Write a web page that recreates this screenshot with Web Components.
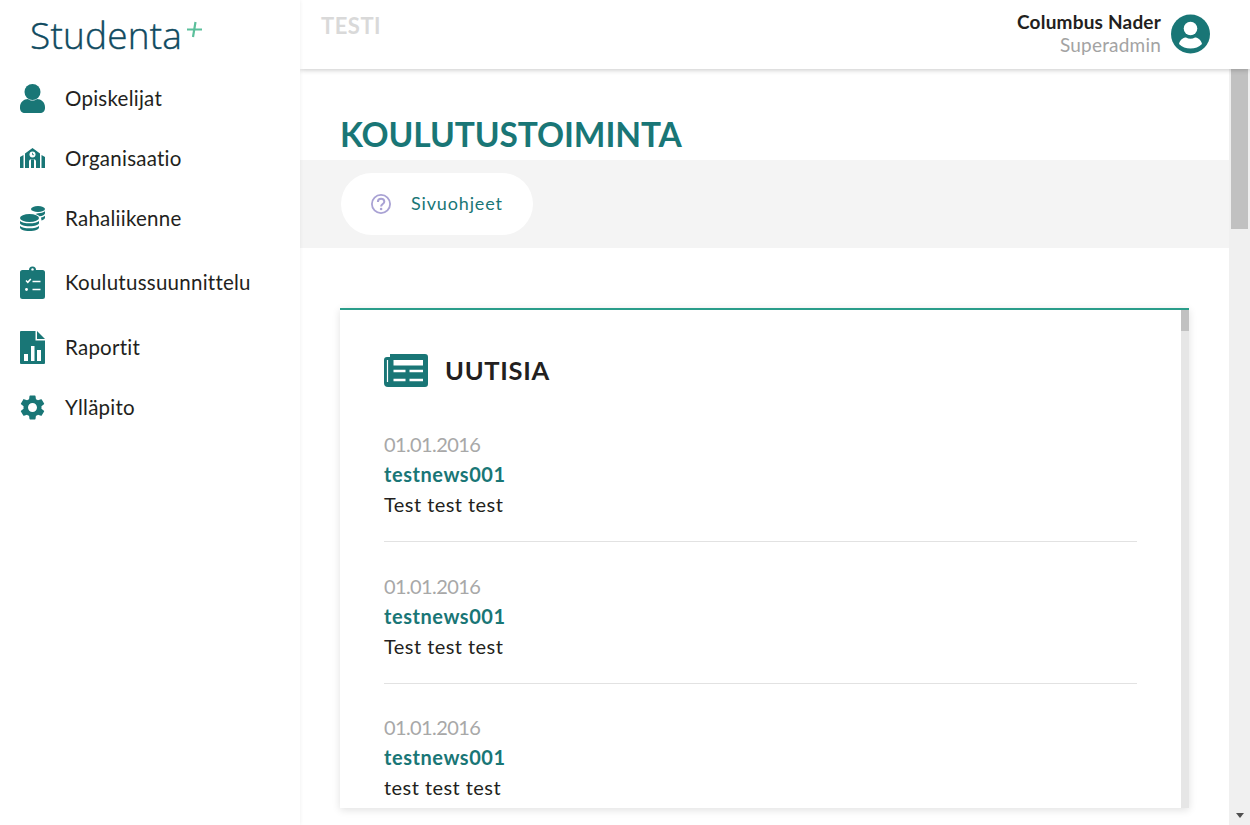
<!DOCTYPE html>
<html>
<head>
<meta charset="utf-8">
<title>Studenta</title>
<style>
  html, body { margin: 0; height: 100%; overflow: hidden; background: #fff; }
  body { font-family: "Lato", "Liberation Sans", sans-serif; color: #231f20; }
</style>
</head>
<body>
<app-shell>
  <side-bar slot="side">
    <nav-item label="Opiskelijat" style="--h:60px">
      <svg width="25" height="29" viewBox="0 0 25 29"><circle cx="12.5" cy="8" r="8" fill="#197676"/><path d="M0 23c0-5 4-8 8-8 1.400 1 2.800 1.500 4.500 1.500S15.600 16 17 15c4 0 8 3 8 8v1c0 3-2 5-5 5H5c-3 0-5-2-5-5z" fill="#197676"/></svg>
    </nav-item>
    <nav-item label="Organisaatio" style="--h:60px">
      <svg width="25" height="20" viewBox="0 0 25 20"><path d="M0 9l3.500-2v13H0zM25 9l-3.500-2v13H25zM5 5.500L12.500 0 20 5.500V20h-4v-6.500c0-1-.7-1.800-1.700-1.800h-3.600c-1 0-1.700.8-1.700 1.800V20H5z" fill="#197676"/><path d="M10.500 12h4v8h-4z" fill="#197676"/><path d="M9.800 11.500h1.200V20H9.800zM14 11.500h1.200V20H14z" fill="#fff"/><circle cx="12.500" cy="6.500" r="3" fill="#fff"/><path d="M12.500 4.800v1.900h1.500" stroke="#197676" stroke-width=".8" fill="none"/></svg>
    </nav-item>
    <nav-item label="Rahaliikenne" style="--h:60px">
      <svg width="25" height="25" viewBox="0 0 25 25" fill="#197676"><ellipse cx="18" cy="3" rx="7" ry="3"/><path d="M18 7.200c2.800 0 5.500-.8 7-2v2c0 1.500-2.500 2.800-5.500 3-1-1-2.500-1.700-4-2.300z"/><path d="M21 11.500c1.800-.3 3.200-1 4-1.800v2c0 1.200-1.500 2.200-3.500 2.700z"/><ellipse cx="9.500" cy="12" rx="9.500" ry="4"/><path d="M0 15c1.800 1.500 5 2.300 9.500 2.300s7.700-.8 9.500-2.300v2c0 1.800-4 3.300-9.500 3.300S0 18.800 0 17z"/><path d="M0 20c1.800 1.500 5 2.300 9.500 2.300s7.700-.8 9.500-2.300v1.500c0 1.900-4 3.500-9.500 3.500S0 23.400 0 21.500z"/></svg>
    </nav-item>
    <nav-item label="Koulutussuunnittelu" style="--h:68px">
      <svg width="25" height="33" viewBox="0 0 25 33"><path d="M2.500 4H9a3.500 3.500 0 0 1 7 0h6.500A2.500 2.500 0 0 1 25 6.500V30.500A2.500 2.500 0 0 1 22.500 33H2.500A2.500 2.500 0 0 1 0 30.500V6.500A2.500 2.500 0 0 1 2.500 4z" fill="#197676"/><circle cx="12.500" cy="3.400" r="1.200" fill="#fff"/><path d="M6 14.500l1.800 1.800 3-3.300" stroke="#fff" stroke-width="1.500" fill="none"/><path d="M12.500 15.500h8M12.500 23.500h8" stroke="#fff" stroke-width="1.600"/><circle cx="6.500" cy="23.500" r="1.400" fill="#fff"/></svg>
    </nav-item>
    <nav-item label="Raportit" style="--h:62px">
      <svg width="25" height="33" viewBox="0 0 25 33"><path d="M1 0h14.500v9.500H25V32a1 1 0 0 1-1 1H1a1 1 0 0 1-1-1V1a1 1 0 0 1 1-1z" fill="#197676"/><path d="M17 0l8 8h-8z" fill="#197676"/><path d="M4 23h4v7H4zM11 15h3.500v15H11zM17 19h4v11h-4z" fill="#fff"/></svg>
    </nav-item>
    <nav-item label="Ylläpito" style="--h:58px">
      <svg width="25" height="25" viewBox="2.600 2 18.800 20"><path fill="#197676" d="M19.140 12.940c.04-.3.06-.61.06-.94 0-.32-.02-.64-.07-.94l2.030-1.580c.18-.14.23-.41.12-.61l-1.920-3.320c-.12-.22-.37-.29-.59-.22l-2.390.96c-.5-.38-1.030-.7-1.620-.94l-.36-2.540c-.04-.24-.24-.41-.48-.41h-3.840c-.24 0-.43.17-.47.41l-.36 2.540c-.59.24-1.130.57-1.620.94l-2.390-.96c-.22-.08-.47 0-.59.22L2.740 8.870c-.12.21-.08.47.12.61l2.030 1.580c-.05.3-.09.63-.09.94s.02.64.07.94l-2.030 1.580c-.18.14-.23.41-.12.61l1.920 3.320c.12.22.37.29.59.22l2.390-.96c.5.38 1.030.7 1.620.94l.36 2.540c.05.24.24.41.48.41h3.840c.24 0 .44-.17.47-.41l.36-2.540c.59-.24 1.130-.56 1.620-.94l2.390.96c.22.08.47 0 .59-.22l1.920-3.320c.12-.22.07-.47-.12-.61l-2.010-1.580zM12 15.600c-1.980 0-3.600-1.620-3.600-3.600s1.620-3.600 3.600-3.600 3.600 1.620 3.600 3.600-1.620 3.600-3.600 3.600z"/></svg>
    </nav-item>
  </side-bar>
  <top-bar slot="top" context="TESTI" user="Columbus Nader" role="Superadmin"></top-bar>
  <page-view slot="main" heading="KOULUTUSTOIMINTA">
    <news-card heading="UUTISIA">
      <news-item date="01.01.2016" name="testnews001" text="Test test test"></news-item>
      <news-item date="01.01.2016" name="testnews001" text="Test test test"></news-item>
      <news-item date="01.01.2016" name="testnews001" text="test test test"></news-item>
    </news-card>
  </page-view>
</app-shell>

<script>
// app frame: sidebar on the left, top bar and page on the right
class AppShell extends HTMLElement {
  constructor () {
    super();
    this.attachShadow({ mode: 'open' });
    this.shadowRoot.innerHTML = `
      <style>
        :host { display: grid; grid-template-columns: 300px 950px; grid-template-rows: 69px 756px; width: 1250px; height: 825px; overflow: hidden; }
        .side { grid-row: 1 / 3; position: relative; z-index: 3; box-shadow: 0 0 4px rgba(0, 0, 0, 0.07); background: #fff; }
        .top { position: relative; z-index: 2; box-shadow: 0 1px 5px rgba(0, 0, 0, 0.22); background: #fff; }
        .main { min-height: 0; overflow: hidden; display: flex; }
      </style>
      <div class="side"><slot name="side"></slot></div>
      <div class="top"><slot name="top"></slot></div>
      <div class="main"><slot name="main"></slot></div>`;
  }
}

class SideBar extends HTMLElement {
  constructor () {
    super();
    this.attachShadow({ mode: 'open' });
    this.shadowRoot.innerHTML = `
      <style>
        :host { display: block; }
        .logo { height: 68px; display: flex; padding-left: 30px; box-sizing: border-box; }
        .word { font-family: "Open Sans", sans-serif; font-weight: 300; font-size: 37px; line-height: 70px; color: #0f4a60; letter-spacing: 0.2px; -webkit-text-stroke: 0.4px #0f4a60; }
        svg { margin: 21px 0 0 4px; }
      </style>
      <div class="logo">
        <span class="word">Studenta</span>
        <svg width="17" height="17" viewBox="0 0 17 17"><path d="M9.500 1L7 16M1 8.500h15" stroke="#5bbf9b" stroke-width="2.200" fill="none"/></svg>
      </div>
      <slot></slot>`;
  }
}

// one row of the side menu, icon goes in the slot
class NavItem extends HTMLElement {
  constructor () {
    super();
    this.attachShadow({ mode: 'open' });
    this.shadowRoot.innerHTML = `
      <style>
        :host { display: flex; align-items: center; height: var(--h, 60px); padding-left: 20px; }
        .icon { width: 25px; display: flex; justify-content: center; flex: none; }
        .label { margin: -1px 0 0 20px; font-size: 20.500px; letter-spacing: 0.250px; color: #231f20; }
      </style>
      <span class="icon"><slot></slot></span>
      <span class="label"></span>`;
  }

  connectedCallback () {
    this.shadowRoot.querySelector('.label').textContent = this.getAttribute('label');
  }
}

class TopBar extends HTMLElement {
  constructor () {
    super();
    this.attachShadow({ mode: 'open' });
    this.shadowRoot.innerHTML = `
      <style>
        :host { display: flex; justify-content: space-between; height: 69px; padding: 0 40px 0 21px; box-sizing: border-box; }
        .context { font-size: 22px; font-weight: 700; color: #d9d9d9; margin-top: 12px; line-height: 28px; letter-spacing: 0.500px; }
        .right { display: flex; gap: 10px; margin-top: 10px; }
        .who { text-align: right; line-height: 24px; font-size: 19px; letter-spacing: 0.200px; }
        .user { font-weight: 700; color: #231f20; }
        .role { color: #a3a3a3; margin-top: -1px; }
        svg { margin-top: 4px; }
      </style>
      <div class="context"></div>
      <div class="right">
        <div class="who"><div class="user"></div><div class="role"></div></div>
        <svg width="39" height="40" viewBox="0 0 39 40">
          <circle cx="19.500" cy="20" r="19.500" fill="#197676"/>
          <circle cx="19.500" cy="14.500" r="6.800" fill="#fff"/>
          <path d="M8 30c1-5 5-6.500 7-6.500 1.500 .8 3 1.200 4.500 1.200s3-.4 4.500-1.200c2 0 6 1.500 7 6.500-3 3-7 4.500-11.500 4.500S11 33 8 30z" fill="#fff"/>
        </svg>
      </div>`;
  }

  connectedCallback () {
    const root = this.shadowRoot;
    root.querySelector('.context').textContent = this.getAttribute('context');
    root.querySelector('.user').textContent = this.getAttribute('user');
    root.querySelector('.role').textContent = this.getAttribute('role');
  }
}

// page content with its heading, help band and the window scrollbar
class PageView extends HTMLElement {
  constructor () {
    super();
    this.attachShadow({ mode: 'open' });
    this.shadowRoot.innerHTML = `
      <style>
        :host { display: flex; width: 950px; height: 756px; }
        .page { width: 929px; flex: none; display: flex; flex-direction: column; }
        h1 { margin: 0; height: 91px; box-sizing: border-box; padding: 44px 0 0 40px; font-size: 33.500px; line-height: 42px; font-weight: 700; color: #197676; letter-spacing: -0.100px; white-space: nowrap; }
        .band { height: 88px; background: #f4f4f4; padding: 13px 0 0 41px; box-sizing: border-box; flex: none; }
        .help { display: inline-flex; align-items: center; width: 192px; height: 62px; box-sizing: border-box; padding-left: 30px; gap: 20px; background: #fff; border-radius: 31px; font-size: 18px; color: #197676; letter-spacing: 0.850px; }
        .help span { margin-top: -2px; }
        .body { padding: 60px 40px 0; flex: 1; min-height: 0; display: flex; }
        .bar { width: 21px; flex: none; background: #f0f0f0; display: flex; flex-direction: column; justify-content: space-between; align-items: center; }
        .thumb { width: 17px; height: 160px; background: #c1c1c1; }
        .arrow { width: 0; height: 0; border: 4.500px solid transparent; border-top: 5px solid #505050; border-bottom: 0; margin-bottom: 7px; }
      </style>
      <div class="page">
        <h1></h1>
        <div class="band">
          <div class="help">
            <svg width="20" height="20" viewBox="0 0 20 20"><circle cx="10" cy="10" r="9.100" fill="none" stroke="#a9a2d4" stroke-width="1.800"/><path d="M6.900 8c0-2 1.400-3.200 3.200-3.200S13.300 6 13.300 7.700c0 2.300-3.200 2.400-3.200 4.800" fill="none" stroke="#a9a2d4" stroke-width="2"/><circle cx="10.100" cy="15" r="1.300" fill="#a9a2d4"/></svg>
            <span>Sivuohjeet</span>
          </div>
        </div>
        <div class="body"><slot></slot></div>
      </div>
      <div class="bar"><div class="thumb"></div><div class="arrow"></div></div>`;
  }

  connectedCallback () {
    this.shadowRoot.querySelector('h1').textContent = this.getAttribute('heading');
  }
}

class NewsCard extends HTMLElement {
  constructor () {
    super();
    this.attachShadow({ mode: 'open' });
    this.shadowRoot.innerHTML = `
      <style>
        :host { display: flex; width: 849px; height: 500px; box-sizing: border-box; border-top: 2px solid #2a9d8a; box-shadow: 0 2px 8px rgba(0, 0, 0, 0.12); background: #fff; }
        .inner { flex: 1; min-width: 0; overflow: hidden; padding: 44px 44px 0 44px; box-sizing: border-box; }
        .head { display: flex; align-items: center; gap: 17px; height: 33px; margin-bottom: 42px; }
        h2 { margin: -2px 0 0; font-size: 25.500px; font-weight: 700; letter-spacing: 0.700px; color: #231f20; }
        .bar { width: 8px; flex: none; background: #e6e6e6; }
        .thumb { height: 21px; background: #c1c1c1; }
      </style>
      <div class="inner">
        <div class="head">
          <svg width="44" height="33" viewBox="0 0 44 33">
            <path d="M6 0h35a3 3 0 0 1 3 3v27a3 3 0 0 1-3 3H4a4 4 0 0 1-4-4V6a3 3 0 0 1 3-3h3z" fill="#197676"/>
            <path d="M3.500 6v22" stroke="#fff" stroke-width="1.200"/>
            <path d="M9.500 6h29.500v5.500H9.500z" fill="#fff"/>
            <path d="M9.500 17h12M25.500 17h13.500M9.500 26h12M25.500 26h13.500" stroke="#fff" stroke-width="2.400"/>
          </svg>
          <h2></h2>
        </div>
        <slot></slot>
      </div>
      <div class="bar"><div class="thumb"></div></div>`;
  }

  connectedCallback () {
    this.shadowRoot.querySelector('h2').textContent = this.getAttribute('heading');
  }
}

class NewsItem extends HTMLElement {
  constructor () {
    super();
    this.attachShadow({ mode: 'open' });
    this.shadowRoot.innerHTML = `
      <style>
        :host { display: block; padding-bottom: 22px; margin-bottom: 28.500px; border-bottom: 1px solid #e2e2e2; font-size: 20px; line-height: 30px; }
        :host(:last-child) { border-bottom: 0; }
        .date { color: #a8a8a8; letter-spacing: -0.600px; }
        .name { color: #197676; font-weight: 700; letter-spacing: 0.550px; }
        .text { color: #231f20; letter-spacing: 0.450px; }
      </style>
      <div class="date"></div>
      <div class="name"></div>
      <div class="text"></div>`;
  }

  connectedCallback () {
    const root = this.shadowRoot;
    root.querySelector('.date').textContent = this.getAttribute('date');
    root.querySelector('.name').textContent = this.getAttribute('name');
    root.querySelector('.text').textContent = this.getAttribute('text');
  }
}

customElements.define('app-shell', AppShell);
customElements.define('side-bar', SideBar);
customElements.define('nav-item', NavItem);
customElements.define('top-bar', TopBar);
customElements.define('page-view', PageView);
customElements.define('news-card', NewsCard);
customElements.define('news-item', NewsItem);
</script>
</body>
</html>
